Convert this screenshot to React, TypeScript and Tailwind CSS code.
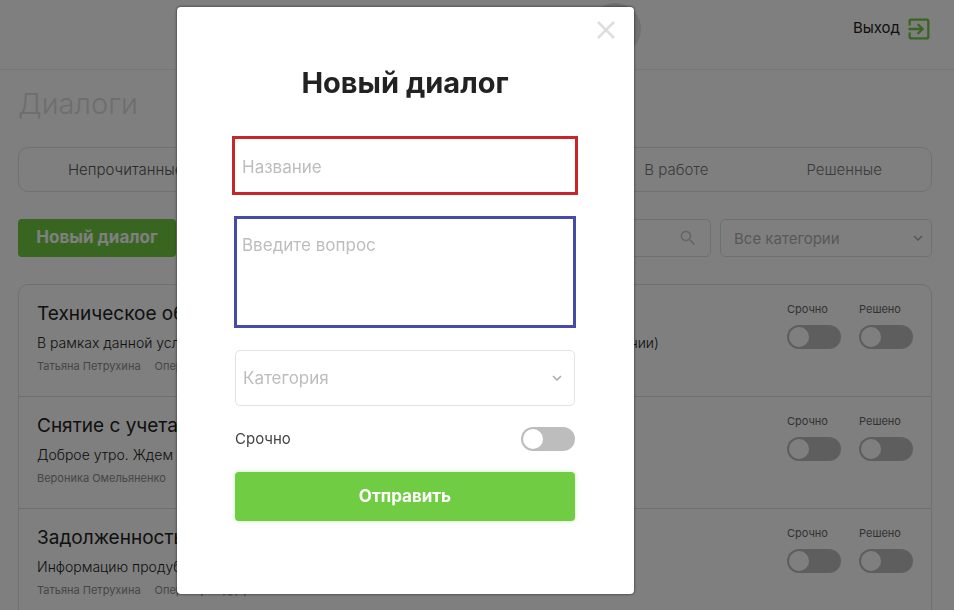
import { useState } from "react";
import { MdExitToApp, MdSearch, MdExpandMore } from "react-icons/md";
import clsx from "clsx";

const tabs = ["Непрочитанные", "Новые", "В работе", "Решенные"];

const dialogs = [
  {
    title: "Техническое обслуживание",
    text: "В рамках данной услуги проводится проверка оборудования и кассы (по заявке компании)",
    author: "Татьяна Петрухина",
    role: "Оператор поддержки",
  },
  {
    title: "Снятие с учета",
    text: "Доброе утро. Ждем ответа",
    author: "Вероника Омельяненко",
    role: "Оператор",
  },
  {
    title: "Задолженность",
    text: "Информацию продублировали",
    author: "Татьяна Петрухина",
    role: "Оператор поддержки",
  },
];

function Toggle({ id }: { id: string }) {
  const [on, setOn] = useState(false);
  return (
    <input
      id={id}
      type="checkbox"
      checked={on}
      onChange={() => setOn(!on)}
      className={clsx(
        "flex h-6 w-[54px] shrink-0 cursor-pointer appearance-none items-center rounded-full px-0.5 before:size-5 before:rounded-full before:bg-white",
        on ? "justify-end bg-[#70cc43]" : "bg-[#bdbdbd]"
      )}
    />
  );
}

function DialogRow({ index, title, text, author, role }: { index: number; title: string; text: string; author: string; role: string }) {
  return (
    <li className="flex justify-between pt-4 pr-[18px] pb-[22px] pl-[18px]">
      <div className="min-w-0 pt-px">
        <h2 className="truncate text-[19px] leading-6 text-[#222]">{title}</h2>
        <p className="mt-[7px] truncate text-[14px] leading-5 font-light text-[#222]">{text}</p>
        <p className="mt-[5px] flex gap-[14px] text-[11px] leading-4 text-[#8c8c8c]">
          <span>{author}</span>
          <span>{role}</span>
        </p>
      </div>
      <div className="flex gap-[18px] text-[11px] leading-4 text-[#666]">
        <div className="flex flex-col gap-2">
          <label htmlFor={`urgent-${index}`}>Срочно</label>
          <Toggle id={`urgent-${index}`} />
        </div>
        <div className="flex flex-col gap-2">
          <label htmlFor={`solved-${index}`}>Решено</label>
          <Toggle id={`solved-${index}`} />
        </div>
      </div>
    </li>
  );
}

function NewDialogModal() {
  return (
    <div className="fixed inset-0 flex items-start justify-center bg-black/50 pt-[7px] pr-[143px]">
      <div role="dialog" aria-labelledby="modal-title" className="w-full max-w-[457px] rounded bg-white pr-[59px] pb-[73px] pl-[58px] shadow-[0_0_3px_rgba(0,0,0,0.7)]">
        <div className="-mr-10 flex justify-end pt-[14px]">
          <button type="button" aria-label="Закрыть" className="text-[#dedede]">
            <svg viewBox="0 0 18 18" className="size-[18px]" fill="none" stroke="currentColor" strokeWidth="2.6">
              <path d="M1 1l16 16M17 1L1 17" />
            </svg>
          </button>
        </div>
        <h2 id="modal-title" className="mt-6 text-center text-[29px] leading-10 font-bold text-[#222]">
          Новый диалог
        </h2>
        <form className="mt-9 flex flex-col" onSubmit={(e) => e.preventDefault()}>
          <input
            aria-label="Название"
            placeholder="Название"
            className="h-[53px] w-full px-[7px] pt-0.5 text-[17px] outline-3 outline-[#c9252d] placeholder:text-[#bdbdbd]"
          />
          <textarea
            aria-label="Введите вопрос"
            placeholder="Введите вопрос"
            className="mt-[25px] h-[110px] w-full resize-none px-[7px] py-4 text-[17px] leading-6 outline-3 -outline-offset-2 outline-[#474ba8] placeholder:text-[#bdbdbd]"
          />
          <div className="mt-[23px] grid items-center">
            <select aria-label="Категория" className="col-start-1 row-start-1 h-14 w-full appearance-none rounded-[5px] border border-[#e3e3e3] px-[7px] pt-0.5 text-[17px] text-[#bdbdbd]">
              <option>Категория</option>
            </select>
            <MdExpandMore size={18} className="pointer-events-none col-start-1 row-start-1 mr-[9px] justify-self-end text-[#aaa]" />
          </div>
          <div className="mt-[21px] flex items-center justify-between">
            <label htmlFor="urgent" className="text-[15px] leading-6 text-[#444]">
              Срочно
            </label>
            <Toggle id="urgent" />
          </div>
          <button type="submit" className="mt-[21px] h-[49px] rounded bg-[#70cc43] text-[17px] font-bold text-white shadow-[0_0_4px_rgba(112,204,67,0.4)]">
            Отправить
          </button>
        </form>
      </div>
    </div>
  );
}

export default function App() {
  return (
    <div className="h-screen overflow-hidden bg-white font-['Inter','Noto_Sans',sans-serif]">
      <header className="flex h-[70px] border-b border-[#eee] pr-[21px] pb-3">
        <div className="flex flex-1 items-center justify-end">
          <div className="size-[52px] rounded-full bg-[#e2e2e2]" />
        </div>
        <div className="flex flex-none basis-[292px] items-center justify-end">
          <a href="#logout" className="flex items-center gap-[5px] text-[15px] text-[#222]">
            Выход
            <MdExitToApp size={28} className="text-[#70cc43]" />
          </a>
        </div>
      </header>

      <main className="pt-[14px] pr-[22px] pl-[18px]">
        <h1 className="text-[29px] leading-10 font-light text-[#dcdcdc]">Диалоги</h1>

        <nav className="mt-[23px] flex h-[45px] rounded-[10px] border border-[#e3e3e3]">
          {tabs.map((tab) => (
            <button
              key={tab}
              className={clsx(
                "px-[49px] pt-0.5 text-[15px] font-light",
                tab === "Непрочитанные" ? "text-[#555]" : "text-[#777]",
                tab === "В работе" && "ml-auto"
              )}
            >
              {tab}
            </button>
          ))}
        </nav>

        <div className="mt-[27px] flex">
          <button className="h-[38px] w-[158px] rounded bg-[#70cc43] text-[17px] font-bold text-white">Новый диалог</button>
          <div className="ml-[9px] grid flex-1 items-center">
            <input aria-label="Поиск" className="col-start-1 row-start-1 h-[38px] w-full rounded-[5px] border border-[#e0e0e0] pr-10 pl-3 text-[15px]" />
            <MdSearch size={20} className="col-start-1 row-start-1 mr-[13px] justify-self-end text-[#ccc]" />
          </div>
          <div className="ml-[9px] grid w-[212px] items-center">
            <select aria-label="Все категории" className="col-start-1 row-start-1 h-[38px] w-full appearance-none rounded-[5px] border border-[#e0e0e0] px-[13px] pt-0.5 text-[15px] text-[#b0b0b0]">
              <option>Все категории</option>
            </select>
            <MdExpandMore size={18} className="pointer-events-none col-start-1 row-start-1 mr-[5px] justify-self-end text-[#aaa]" />
          </div>
        </div>

        <ul className="mt-[27px] divide-y divide-[#dedede] rounded-[10px] border border-[#e0e0e0]">
          {dialogs.map((dialog, i) => (
            <DialogRow key={dialog.title} index={i} {...dialog} />
          ))}
        </ul>
      </main>

      <NewDialogModal />
    </div>
  );
}
